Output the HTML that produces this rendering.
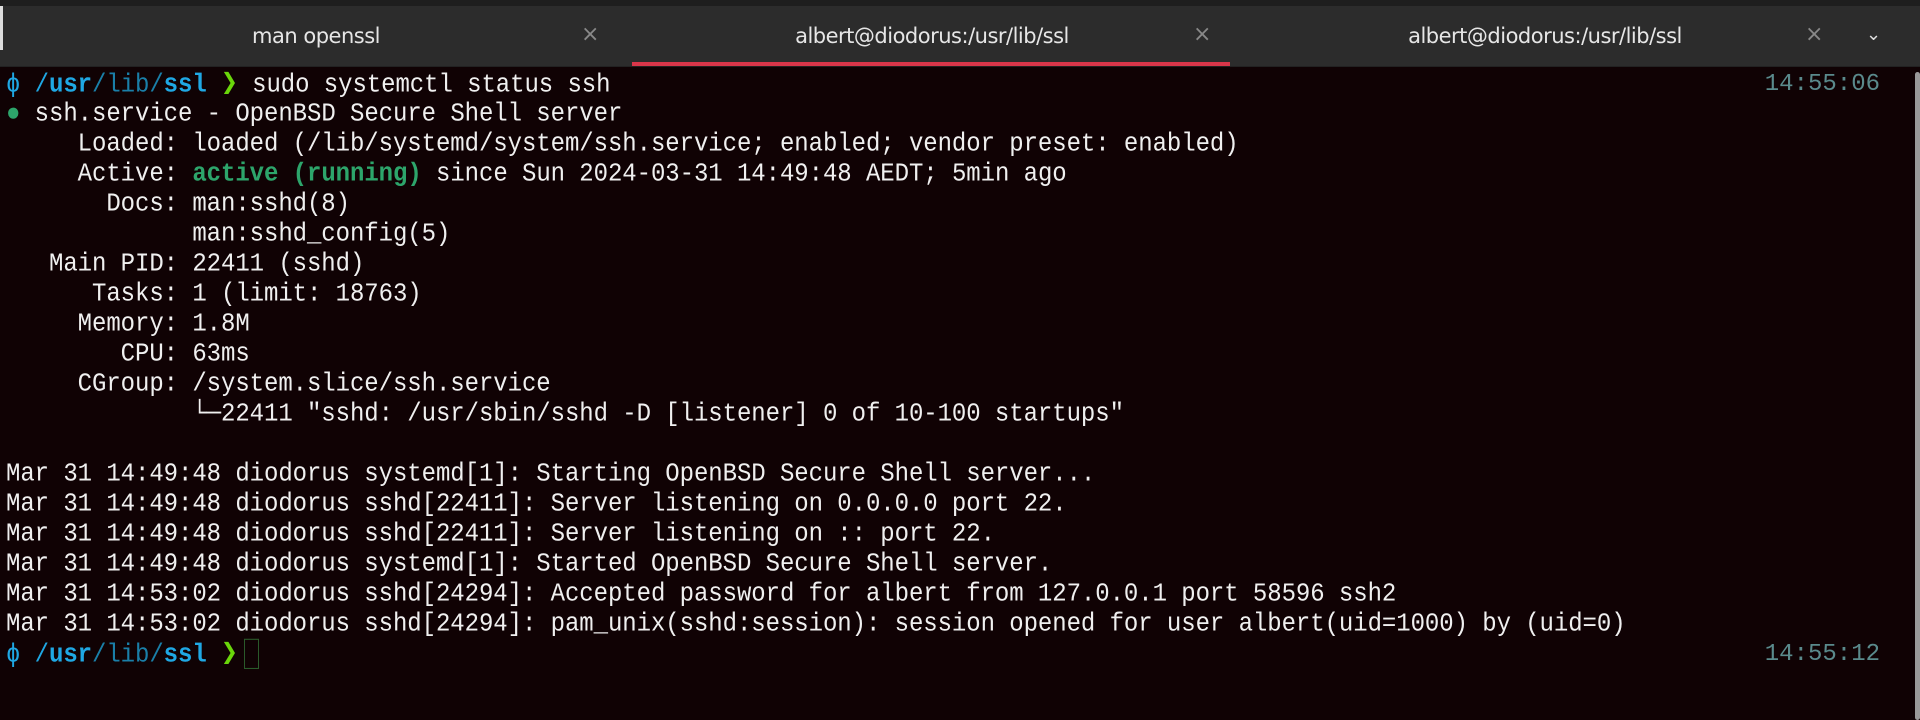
<!DOCTYPE html>
<html><head><meta charset="utf-8"><style>
html,body{margin:0;padding:0;width:1920px;height:720px;overflow:hidden;background:#100204;}
.top{position:absolute;left:0;top:0;width:1920px;height:6px;background:#1e1e1e;}
.tabs{position:absolute;left:0;top:6px;width:1920px;height:60px;background:#2c2c2c;border-bottom:1px solid #222;}
.tab{position:absolute;top:0;height:60px;line-height:60px;color:#e6e6e6;font-family:"DejaVu Sans","Liberation Sans",sans-serif;font-size:21px;text-align:center;letter-spacing:-0.5px}
.x{position:absolute;top:0;height:60px;line-height:58px;color:#888;font-family:"DejaVu Sans",sans-serif;font-size:22px}
.ul{position:absolute;left:632px;top:62px;width:598px;height:4px;background:#d9364a}
.lw{position:absolute;left:0;top:6px;width:3px;height:44px;background:#ddd}
.t{position:absolute;left:6px;margin-top:2px;font-family:"Liberation Mono","DejaVu Sans Mono",monospace;font-size:24px;letter-spacing:-0.07px;line-height:30px;color:#f0f0f0;white-space:pre;transform:scaleY(1.08);transform-origin:0 50%}
.g{color:#2da56b;font-weight:bold}.c{color:#1fa8e4}.cb{color:#1fa8e4;font-weight:bold}.d{color:#1a7fa8}.p{color:#6ad60a;font-weight:bold;font-size:28px}
.ts{position:absolute;right:40px;margin-top:2px;font-family:"Liberation Mono",monospace;font-size:24px;line-height:30px;color:#5a8a8c}
.sb{position:absolute;left:1915px;top:72px;width:5px;height:648px;background:#999;border-radius:3px}
.cur{display:inline-block;width:15px;height:28px;border:1px solid #2a5a2a;vertical-align:top;box-sizing:border-box;margin-left:6px}
</style></head><body>
<div class="top"></div>
<div class="tabs">
<div class="tab" style="left:0;width:632px">man openssl</div>
<div class="x" style="left:581px">×</div>
<div class="tab" style="left:632px;width:600px">albert@diodorus:/usr/lib/ssl</div>
<div class="x" style="left:1193px">×</div>
<div class="tab" style="left:1232px;width:626px">albert@diodorus:/usr/lib/ssl</div>
<div class="x" style="left:1805px">×</div>
<div class="x" style="left:1866px;color:#ddd;font-size:18px">&#8964;</div>
</div>
<div class="ul"></div>
<div class="lw"></div>
<div class="sb"></div>
<div class="t" style="top:68px"><span class="c">ϕ /</span><span class="cb">usr</span><span class="d">/lib/</span><span class="cb">ssl</span> <span class="p">❯</span> sudo systemctl status ssh</div>
<div class="ts" style="top:68px">14:55:06</div>
<div class="t" style="top:98px"><span class="g">●</span> ssh.service - OpenBSD Secure Shell server</div>
<div class="t" style="top:128px">     Loaded: loaded (/lib/systemd/system/ssh.service; enabled; vendor preset: enabled)</div>
<div class="t" style="top:158px">     Active: <span class="g">active (running)</span> since Sun 2024-03-31 14:49:48 AEDT; 5min ago</div>
<div class="t" style="top:188px">       Docs: man:sshd(8)</div>
<div class="t" style="top:218px">             man:sshd_config(5)</div>
<div class="t" style="top:248px">   Main PID: 22411 (sshd)</div>
<div class="t" style="top:278px">      Tasks: 1 (limit: 18763)</div>
<div class="t" style="top:308px">     Memory: 1.8M</div>
<div class="t" style="top:338px">        CPU: 63ms</div>
<div class="t" style="top:368px">     CGroup: /system.slice/ssh.service</div>
<div class="t" style="top:398px">             └─22411 "sshd: /usr/sbin/sshd -D [listener] 0 of 10-100 startups"</div>
<div class="t" style="top:458px">Mar 31 14:49:48 diodorus systemd[1]: Starting OpenBSD Secure Shell server...</div>
<div class="t" style="top:488px">Mar 31 14:49:48 diodorus sshd[22411]: Server listening on 0.0.0.0 port 22.</div>
<div class="t" style="top:518px">Mar 31 14:49:48 diodorus sshd[22411]: Server listening on :: port 22.</div>
<div class="t" style="top:548px">Mar 31 14:49:48 diodorus systemd[1]: Started OpenBSD Secure Shell server.</div>
<div class="t" style="top:578px">Mar 31 14:53:02 diodorus sshd[24294]: Accepted password for albert from 127.0.0.1 port 58596 ssh2</div>
<div class="t" style="top:608px">Mar 31 14:53:02 diodorus sshd[24294]: pam_unix(sshd:session): session opened for user albert(uid=1000) by (uid=0)</div>
<div class="t" style="top:638px"><span class="c">ϕ /</span><span class="cb">usr</span><span class="d">/lib/</span><span class="cb">ssl</span> <span class="p">❯</span><span class="cur"></span></div>
<div class="ts" style="top:638px">14:55:12</div>
</body></html>
